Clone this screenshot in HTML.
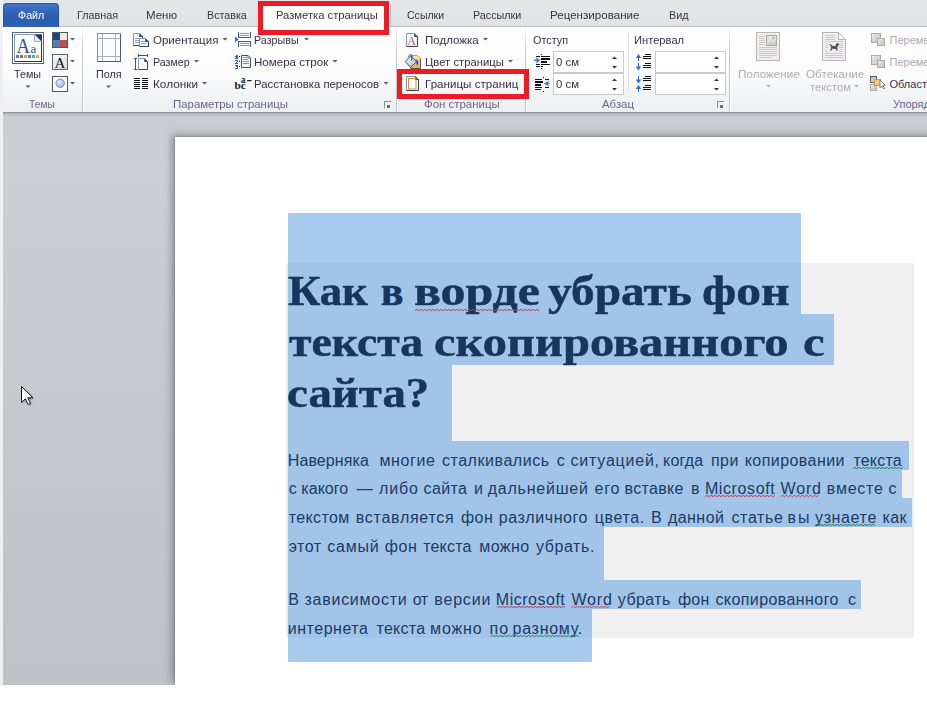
<!DOCTYPE html><html><head><meta charset="utf-8"><style>
*{margin:0;padding:0;box-sizing:border-box}
html,body{width:927px;height:723px;overflow:hidden;background:#fff;position:relative}
.a{position:absolute}
.t{position:absolute;white-space:pre;line-height:1;transform-origin:0 0}
</style></head><body>
<div class="a" style="left:0;top:0;width:3px;height:685px;background:#efefef"></div>
<div class="a" style="left:3px;top:0;width:924px;height:27px;background:linear-gradient(#e4e7ea,#dfe3e6)"></div>
<div class="a" style="left:3px;top:26px;width:924px;height:1px;background:#b8bdc3"></div>
<div class="a" style="left:3px;top:3px;width:56px;height:24px;border-radius:4px 4px 0 0;background:linear-gradient(#3f74c6,#2b5cae 60%,#2f62b4);border:1px solid #2a55a0;border-bottom:none"></div>
<div class="a" style="left:262px;top:3px;width:129px;height:24px;border-radius:3px 3px 0 0;background:#fff;border:1px solid #b6bbc2;border-bottom:none"></div>
<div class="a" style="left:3px;top:27px;width:924px;height:85px;background:linear-gradient(#ffffff 0%,#fbfbfc 55%,#f1f3f5 80%,#eceff2 100%)"></div>
<div class="a" style="left:3px;top:112px;width:924px;height:1px;background:#8f959c"></div>
<div class="a" style="left:3px;top:113px;width:924px;height:572px;background:linear-gradient(#c9cdd2,#cbcfd4 10%,#bec1c6)"></div>
<div class="a" style="left:3px;top:113px;width:924px;height:3px;background:linear-gradient(#aeb2b8,rgba(203,207,212,0))"></div>
<div class="a" style="left:175px;top:137px;width:800px;height:548px;background:#fff;box-shadow:-3px -2px 8px rgba(60,65,75,0.45), 0 0 2px rgba(60,65,75,0.5)"></div>
<div class="a" style="left:286px;top:263px;width:628px;height:375px;background:#f0f0f0"></div>
<div class="a" style="left:288px;top:213px;width:513px;height:50px;background:#a8cbef"></div>
<div class="a" style="left:288px;top:263px;width:513px;height:51px;background:#a1c4e8"></div>
<div class="a" style="left:288px;top:314px;width:546px;height:51px;background:#a1c4e8"></div>
<div class="a" style="left:288px;top:365px;width:164px;height:76px;background:#a1c4e8"></div>
<div class="a" style="left:288px;top:441px;width:621px;height:29px;background:#a1c4e8"></div>
<div class="a" style="left:288px;top:470px;width:614px;height:28px;background:#a1c4e8"></div>
<div class="a" style="left:288px;top:498px;width:624px;height:29px;background:#a1c4e8"></div>
<div class="a" style="left:288px;top:527px;width:316px;height:53px;background:#a1c4e8"></div>
<div class="a" style="left:288px;top:580px;width:573px;height:29px;background:#a1c4e8"></div>
<div class="a" style="left:288px;top:609px;width:304px;height:29px;background:#a1c4e8"></div>
<div class="a" style="left:288px;top:638px;width:304px;height:24px;background:#a8cbef"></div>
<svg class="a" style="left:0;top:0" width="927" height="113" viewBox="0 0 927 113">
<defs>
<linearGradient id="gSep" x1="0" y1="0" x2="0" y2="1"><stop offset="0" stop-color="#c5c9cf" stop-opacity="0.1"/><stop offset="0.25" stop-color="#c5c9cf"/><stop offset="1" stop-color="#c0c4ca"/></linearGradient>
<linearGradient id="gPage" x1="0" y1="0" x2="1" y2="1"><stop offset="0" stop-color="#ffffff"/><stop offset="1" stop-color="#d9e0ea"/></linearGradient>
<linearGradient id="gFont" x1="0" y1="0" x2="1" y2="1"><stop offset="0" stop-color="#f6f8fb"/><stop offset="1" stop-color="#d5dde8"/></linearGradient>
<linearGradient id="gSq" x1="0" y1="0" x2="1" y2="1"><stop offset="0" stop-color="#eeeeee"/><stop offset="1" stop-color="#bdbdbd"/></linearGradient>
<radialGradient id="gCirc" cx="0.4" cy="0.35" r="0.7"><stop offset="0" stop-color="#e4eefc"/><stop offset="1" stop-color="#8fb3e8"/></radialGradient>
<linearGradient id="gBucket" x1="0" y1="0" x2="1" y2="1"><stop offset="0" stop-color="#ffffff"/><stop offset="1" stop-color="#9fb9dc"/></linearGradient>
<linearGradient id="gYel" x1="0" y1="0" x2="0" y2="1"><stop offset="0" stop-color="#fbe3a8"/><stop offset="1" stop-color="#e9b661"/></linearGradient>
</defs>
<g shape-rendering="crispEdges">
<!-- group separators -->
<rect x="82" y="27" width="1" height="85" fill="url(#gSep)"/><rect x="83" y="27" width="1" height="85" fill="#ffffff"/>
<rect x="396" y="27" width="1" height="85" fill="url(#gSep)"/><rect x="397" y="27" width="1" height="85" fill="#ffffff"/>
<rect x="525" y="27" width="1" height="85" fill="url(#gSep)"/><rect x="526" y="27" width="1" height="85" fill="#ffffff"/>
<rect x="729" y="27" width="1" height="85" fill="url(#gSep)"/><rect x="730" y="27" width="1" height="85" fill="#ffffff"/>
<rect x="628" y="34" width="1" height="56" fill="#dcdfe3"/>

<!-- Темы big icon -->
<rect x="12.5" y="32.5" width="31" height="31" fill="#ffffff" stroke="#5d6675"/>
<rect x="14.5" y="34.5" width="27" height="27" fill="#ffffff" stroke="#8d9cb6"/><path d="M41.5 34.5 V61.5 H14.5" fill="none" stroke="#22325a"/>
<rect x="16" y="55" width="3" height="3" fill="#4f81bd"/>
<rect x="20" y="55" width="3" height="3" fill="#c0504d"/>
<rect x="24" y="55" width="3" height="3" fill="#9bbb59"/>
<rect x="28" y="55" width="3" height="3" fill="#8064a2"/>
<rect x="32" y="55" width="3" height="3" fill="#4bacc6"/>
<rect x="36" y="55" width="3" height="3" fill="#f79646"/>
<!-- Colors icon -->
<rect x="52.5" y="32.5" width="15" height="15" fill="#fff" stroke="#4e5663"/>
<rect x="53" y="33" width="7" height="7" fill="#1f497d"/>
<rect x="60" y="33" width="7" height="7" fill="#eeece1"/>
<rect x="53" y="40" width="7" height="7" fill="#4f81bd"/>
<rect x="60" y="40" width="7" height="7" fill="#c0504d"/>
<!-- Fonts icon -->
<rect x="52.5" y="54.5" width="15" height="15" fill="url(#gFont)" stroke="#5a6270"/>
<!-- Effects icon -->
<rect x="52.5" y="76.5" width="15" height="15" fill="#fff" stroke="#4e5663"/>
<!-- Поля icon -->
<rect x="97.5" y="33.5" width="23" height="28" fill="#fbfcfe" stroke="#7d8ca3"/>
<path d="M120.5 33.5 V61.5 H97.5" fill="none" stroke="#4a5a78"/>
<rect x="102" y="34" width="1" height="27" fill="#a3b1c8"/>
<rect x="115" y="34" width="1" height="27" fill="#a3b1c8"/>
<rect x="98" y="38" width="22" height="1" fill="#a3b1c8"/>
<rect x="98" y="56" width="22" height="1" fill="#a3b1c8"/>
<!-- Колонки -->
<g fill="#111">
<rect x="134" y="78" width="6" height="1"/><rect x="142" y="78" width="6" height="1"/>
<rect x="134" y="80" width="6" height="1"/><rect x="142" y="80" width="6" height="1"/>
<rect x="134" y="82" width="6" height="1"/><rect x="142" y="82" width="6" height="1"/>
<rect x="134" y="84" width="6" height="1"/><rect x="142" y="84" width="6" height="1"/>
<rect x="134" y="86" width="6" height="1"/><rect x="142" y="86" width="6" height="1"/>
<rect x="134" y="88" width="6" height="1"/><rect x="142" y="88" width="6" height="1"/>
</g>
<!-- Размер -->
<g fill="#2f4e9c">
<rect x="135" y="58" width="1" height="12"/><rect x="134" y="58" width="3" height="1"/><rect x="134" y="69" width="3" height="1"/>
<rect x="138" y="55" width="10" height="1"/><rect x="138" y="54" width="1" height="3"/><rect x="147" y="54" width="1" height="3"/>
</g>
<!-- Разрывы -->
<path d="M238.5 32 V37.5 H250.5 V32" fill="#f4f6fa" stroke="#4a5b7a"/>
<rect x="240" y="33" width="9" height="1" fill="#7f98c8"/><rect x="240" y="35" width="9" height="1" fill="#7f98c8"/>
<path d="M238.5 47 V41.5 H250.5 V47" fill="#f4f6fa" stroke="#4a5b7a"/>
<rect x="240" y="43" width="9" height="1" fill="#7f98c8"/><rect x="240" y="45" width="9" height="1" fill="#7f98c8"/>
<!-- Номера строк -->

<!-- Отступ icons -->
<g fill="#111">
<rect x="541" y="54" width="1" height="1"/>
<rect x="536" y="56" width="4" height="1"/><rect x="541" y="56" width="9" height="1"/>
<rect x="541" y="58" width="9" height="2"/>
<rect x="541" y="61" width="6" height="2"/>
<rect x="536" y="64" width="4" height="1"/><rect x="541" y="64" width="9" height="1"/>
<rect x="536" y="66" width="4" height="1"/><rect x="541" y="66" width="2" height="1"/>
<rect x="541" y="68" width="1" height="1"/>
</g>
<g fill="#111">
<rect x="543" y="77" width="1" height="1"/>
<rect x="535" y="79" width="7" height="1"/><rect x="545" y="79" width="4" height="1"/>
<rect x="535" y="81" width="8" height="2"/>
<rect x="535" y="84" width="6" height="2"/>
<rect x="535" y="87" width="7" height="1"/><rect x="545" y="87" width="4" height="1"/>
<rect x="535" y="89" width="6" height="1"/>
<rect x="543" y="91" width="1" height="1"/>
</g>
<!-- spinboxes -->
<rect x="553.5" y="51.5" width="70" height="21" fill="#fff" stroke="#c6cad0"/>
<rect x="553.5" y="73.5" width="70" height="21" fill="#fff" stroke="#c6cad0"/>
<rect x="655.5" y="51.5" width="70" height="21" fill="#fff" stroke="#c6cad0"/>
<rect x="655.5" y="73.5" width="70" height="21" fill="#fff" stroke="#c6cad0"/>
<!-- Интервал icons -->
<g fill="#111">
<rect x="645" y="54" width="6" height="1"/><rect x="643" y="56" width="8" height="1"/><rect x="643" y="58" width="8" height="1"/>
<rect x="645" y="63" width="6" height="1"/><rect x="643" y="65" width="8" height="1"/><rect x="643" y="67" width="8" height="1"/>
<rect x="645" y="76" width="6" height="1"/><rect x="643" y="78" width="8" height="1"/><rect x="643" y="80" width="8" height="1"/>
<rect x="645" y="85" width="6" height="1"/><rect x="643" y="87" width="8" height="1"/><rect x="643" y="89" width="8" height="1"/>
</g>
<g fill="#2f6ad0">
<rect x="638" y="56" width="1" height="5"/><rect x="638" y="63" width="1" height="5"/>
<rect x="638" y="76" width="1" height="5"/><rect x="638" y="87" width="1" height="5"/>
</g>
<!-- Положение -->
<rect x="756.5" y="32.5" width="23" height="28" fill="#efeded" stroke="#b9b5b5"/>
<g fill="#cfcaca">
<rect x="759" y="36" width="6" height="1"/><rect x="759" y="38" width="6" height="1"/><rect x="759" y="40" width="6" height="1"/><rect x="759" y="42" width="6" height="1"/><rect x="759" y="44" width="6" height="1"/>
<rect x="759" y="47" width="18" height="1"/><rect x="759" y="49" width="18" height="1"/><rect x="759" y="51" width="18" height="1"/><rect x="759" y="53" width="18" height="1"/><rect x="759" y="55" width="18" height="1"/><rect x="759" y="57" width="12" height="1"/>
</g>
<rect x="766.5" y="35.5" width="10" height="10" fill="#e3e0e0" stroke="#a9a5a5"/>
<!-- Обтекание -->
<path d="M822.5 32.5 H838.5 L845.5 39.5 V60.5 H822.5 Z" fill="#efedef" stroke="#b9b5b9"/>
<g fill="#cdc9cd">
<rect x="825" y="35" width="10" height="1"/><rect x="825" y="37" width="10" height="1"/><rect x="825" y="39" width="10" height="1"/>
<rect x="825" y="41" width="18" height="1"/>
<rect x="825" y="43" width="2" height="1"/><rect x="841" y="43" width="2" height="1"/>
<rect x="825" y="45" width="3" height="1"/><rect x="840" y="45" width="3" height="1"/>
<rect x="825" y="47" width="3" height="1"/><rect x="839" y="47" width="4" height="1"/>
<rect x="825" y="49" width="2" height="1"/><rect x="840" y="49" width="3" height="1"/>
<rect x="825" y="51" width="3" height="1"/><rect x="839" y="51" width="4" height="1"/>
<rect x="825" y="53" width="18" height="1"/><rect x="825" y="55" width="18" height="1"/><rect x="825" y="57" width="18" height="1"/>
</g>
<!-- Arrange icons -->
<rect x="871.5" y="33.5" width="9" height="9" fill="url(#gSq)" stroke="#a9a9a9"/>
<rect x="877.5" y="38.5" width="7" height="7" fill="url(#gSq)" stroke="#a9a9a9"/>
<rect x="871.5" y="55.5" width="9" height="9" fill="url(#gSq)" stroke="#a9a9a9"/>
<rect x="877.5" y="60.5" width="7" height="7" fill="url(#gSq)" stroke="#a9a9a9"/>
<rect x="870.5" y="76.5" width="6" height="6" fill="#c5ccd6" stroke="#4e5a70"/>
<rect x="870.5" y="84.5" width="6" height="6" fill="url(#gSq)" stroke="#a9a9a9"/>
<rect x="874.5" y="79.5" width="6" height="6" fill="#f5c878" stroke="#c99a3e"/>
<!-- dialog launchers -->
<path d="M384.5 108 V101.5 H391" fill="none" stroke="#8d8d8d"/>
<rect x="387" y="105" width="3" height="3" fill="#6d6d6d"/>
<path d="M717.5 108 V101.5 H724" fill="none" stroke="#8d8d8d"/>
<rect x="720" y="105" width="3" height="3" fill="#6d6d6d"/>
</g>

<!-- antialiased parts -->
<!-- Темы dog-ear -->
<path d="M34.5 34.5 H41.5 V41.5 Z" fill="#1f3466"/>
<path d="M34.5 34.5 V41.5 H41.5 Z" fill="#e3e9f4" stroke="#8d9cb6" stroke-width="0.8"/>
<text x="16.6" y="53" font-family="Liberation Serif" font-size="20.5" fill="#2c4f9a" textLength="13.5" lengthAdjust="spacingAndGlyphs">A</text>
<text x="30.6" y="53" font-family="Liberation Serif" font-size="13" fill="#2c4f9a">a</text>
<text x="54.5" y="68" font-family="Liberation Serif" font-size="15" fill="#111">A</text>
<circle cx="60.2" cy="83.2" r="4.2" fill="url(#gCirc)" stroke="#5b86cf" stroke-width="0.9"/>
<!-- Ориентация -->
<path d="M133.5 33.5 H139.5 L142.5 36.5 V45.5 H133.5 Z" fill="#fbfcfe" stroke="#8393b0"/>
<path d="M142.5 36.5 V45.5 H133.5" fill="none" stroke="#2f4664"/>
<path d="M139.2 33.2 L143 37 H139.2 Z" fill="#2f4664"/>
<g fill="#8fa2c4" shape-rendering="crispEdges"><rect x="135" y="38" width="4" height="1"/><rect x="135" y="40" width="4" height="1"/><rect x="135" y="42" width="4" height="1"/></g>
<path d="M139.5 38.5 H145.5 L148.5 41.5 V46.5 H139.5 Z" fill="#f1f4fa" stroke="#8393b0"/>
<path d="M148.5 41.5 V46.5 H139.5" fill="none" stroke="#2f4664"/>
<path d="M145.2 38.2 L149 42 H145.2 Z" fill="#2f4664"/>
<g fill="#8fa2c4" shape-rendering="crispEdges"><rect x="141" y="41" width="4" height="1"/><rect x="141" y="43" width="5" height="1"/></g>
<!-- Размер page -->
<path d="M138.5 58.5 H144.5 L147.5 61.5 V69.5 H138.5 Z" fill="#fbfcfe" stroke="#8393b0"/><path d="M147.5 61.5 V69.5 H138.5" fill="none" stroke="#2f4664"/><path d="M144.2 58.2 L148.0 62.0 H144.2 Z" fill="#2f4664"/>
<!-- Разрывы triangle -->
<path d="M235 36.5 L238.5 39.5 L235 42.5 Z" fill="#2f6ad0"/>
<!-- Номера строк -->
<g fill="#2e62c8" shape-rendering="crispEdges">
<rect x="236" y="55" width="2" height="4"/><rect x="235" y="56" width="1" height="1"/><rect x="235" y="58" width="3" height="1"/>
<rect x="235" y="60" width="3" height="1"/><rect x="237" y="61" width="1" height="1"/><rect x="236" y="62" width="1" height="1"/><rect x="235" y="63" width="3" height="1"/>
<rect x="235" y="65" width="3" height="1"/><rect x="236" y="66" width="2" height="1"/><rect x="237" y="67" width="1" height="1"/><rect x="235" y="68" width="3" height="1"/>
</g>
<g fill="#111" shape-rendering="crispEdges"><rect x="239" y="56" width="1" height="1"/><rect x="239" y="61" width="1" height="1"/><rect x="239" y="66" width="1" height="1"/></g>
<path d="M241.5 55.5 H248 L250.5 58 V67.5 H241.5 Z" fill="#f4f6fa" stroke="#3d5478"/>
<path d="M248 55.5 V58 H250.5" fill="#dfe6f0" stroke="#3d5478" stroke-width="0.8"/>
<g fill="#7f8fb0" shape-rendering="crispEdges"><rect x="243" y="57" width="4" height="1"/><rect x="243" y="59" width="5" height="1"/><rect x="243" y="61" width="6" height="1"/><rect x="243" y="63" width="6" height="1"/></g>
<!-- Расстановка -->
<text x="234.5" y="89" font-family="Liberation Serif" font-weight="bold" font-size="11" fill="#222" textLength="11.3" lengthAdjust="spacingAndGlyphs">bc</text>
<text x="240.8" y="82.6" font-family="Liberation Serif" font-weight="bold" font-size="9.5" fill="#222">a</text>
<rect x="247" y="80" width="4.5" height="1.2" fill="#222"/>
<!-- Подложка -->
<path d="M406.5 33.5 H414.5 L417.5 36.5 V46.5 H406.5 Z" fill="#fbfcfe" stroke="#8393b0"/><path d="M417.5 36.5 V46.5 H406.5" fill="none" stroke="#2f4664"/><path d="M414.2 33.2 L418.0 37.0 H414.2 Z" fill="#2f4664"/>
<text x="407.3" y="45.3" font-family="Liberation Serif" font-size="12" fill="#c0504d">A</text>
<!-- Цвет страницы -->
<path d="M410.5 55.5 H417.5 L420.5 58.5 V68.5 H410.5 Z" fill="url(#gYel)" stroke="#caa25a"/>
<path d="M420.5 58.5 V68.5 H410.5" fill="none" stroke="#5a4a30" stroke-width="0.9"/>
<path d="M405.2 61.5 L410.5 56.2 L416.8 61.5 L410.5 67.3 Z" fill="url(#gBucket)" stroke="#22407a" stroke-width="0.9"/>
<path d="M408 57.5 Q409 53.8 411.5 54.5 Q412.5 55.5 412 57" fill="none" stroke="#4a6fb0" stroke-width="0.9"/>
<line x1="411.7" y1="55.5" x2="411.7" y2="60.5" stroke="#3a4a60" stroke-width="1"/>
<path d="M416 59.5 Q418.8 60 418.5 63 Q418.2 65.5 417 66 Q416.5 63.5 415.8 62 Z" fill="#2d62d0"/>
<!-- Границы страниц -->
<path d="M406.5 76.5 H415.5 L418.5 79.5 V90.5 H406.5 Z" fill="#fbfcfe" stroke="#8393b0"/><path d="M418.5 79.5 V90.5 H406.5" fill="none" stroke="#2f4664"/><path d="M415.2 76.2 L419.0 80.0 H415.2 Z" fill="#2f4664"/>
<rect x="408.5" y="78.5" width="7.5" height="10.5" fill="none" stroke="#dc8c28"/>
<!-- Отступ arrows -->
<g fill="#3570d4">
<rect x="534" y="59.6" width="3.5" height="1.3"/>
<path d="M535.5 57.2 L540.6 60.2 L535.5 63.2 L537 60.2 Z"/>
<rect x="546" y="82.8" width="3.5" height="1.3"/>
<path d="M549 80.4 L543.9 83.4 L549 86.4 L547.5 83.4 Z"/>
</g>
<!-- Интервал arrows -->
<g fill="#2f6ad0">
<path d="M635.8 58 L638.5 54 L641.2 58 Z"/>
<path d="M635.8 66.5 L638.5 70.5 L641.2 66.5 Z"/>
<path d="M635.8 79.5 L638.5 83.5 L641.2 79.5 Z"/>
<path d="M635.8 89 L638.5 85 L641.2 89 Z"/>
</g>
<!-- spin arrows -->
<g fill="#333">
<path d="M612 59 L614.5 56.5 L617 59 Z"/><path d="M612 66 L614.5 68.5 L617 66 Z"/>
<path d="M612 81 L614.5 78.5 L617 81 Z"/><path d="M612 88 L614.5 90.5 L617 88 Z"/>
<path d="M714 59 L716.5 56.5 L719 59 Z"/><path d="M714 66 L716.5 68.5 L719 66 Z"/>
<path d="M714 81 L716.5 78.5 L719 81 Z"/><path d="M714 88 L716.5 90.5 L719 88 Z"/>
</g>
<!-- fold -->
<path d="M838.5 32.5 V39.5 H845.5 Z" fill="#fbfbfb" stroke="#b9b5b5" stroke-linejoin="round"/>
<!-- dog -->
<path d="M828.8 43.9 L830.9 44.3 L832.6 45.9 L835.4 45.9 L836.2 43.7 L837.8 42.9 L839.2 44 L839.3 44.9 L838.1 45.5 L837.2 47.8 L837.8 50.2 L837 51 L835.7 49.1 L832.4 48.7 L831.4 50.6 L830.1 51 L830.5 49.4 L831.1 47.4 L830.3 45.2 Z" fill="#555"/>
<!-- Положение picture -->
<path d="M767.5 45 L771 40.5 L773.5 43 L776 40 V45 Z" fill="#cfcbcb"/>
<circle cx="773.5" cy="38" r="1.2" fill="#bdb8b8"/>
<!-- selection cursor small -->
<path d="M880 80 V88 L882 86 L883.5 89 L884.5 88.5 L883 85.5 L885.5 85.5 Z" fill="#fff" stroke="#555" stroke-width="0.7"/>
<!-- dropdown arrows -->
<g fill="#595959">
<path d="M70 38 H75 L72.5 40.5 Z"/><path d="M70 60 H75 L72.5 62.5 Z"/><path d="M70 82 H75 L72.5 84.5 Z"/>
<path d="M25.5 85.5 H30.5 L28 88 Z"/><path d="M106 85.5 H111 L108.5 88 Z"/>
<path d="M222.5 38 H227.5 L225 40.5 Z"/><path d="M194 60 H199 L196.5 62.5 Z"/><path d="M202 82 H207 L204.5 84.5 Z"/>
<path d="M304 38 H309 L306.5 40.5 Z"/><path d="M332.5 60 H337.5 L335 62.5 Z"/><path d="M383.5 82 H388.5 L386 84.5 Z"/>
<path d="M483 38 H488 L485.5 40.5 Z"/><path d="M508 60 H513 L510.5 62.5 Z"/>
</g>
<g fill="#b4b4b4">
<path d="M766 85 H771 L768.5 87.5 Z"/><path d="M854 85 H859 L856.5 87.5 Z"/>
</g>
</svg>
<!-- mouse cursor -->
<svg class="a" style="left:19px;top:384px" width="18" height="24" viewBox="0 0 18 24">
<defs><filter id="cs" x="-50%" y="-50%" width="200%" height="200%"><feGaussianBlur stdDeviation="0.9"/></filter></defs>
<path d="M2.5 2.5 V18.5 L6.3 14.8 L9.2 20.5 L11.5 19.5 L8.8 13.8 L14 13.8 Z" fill="#000" opacity="0.3" filter="url(#cs)" transform="translate(1.2,1.2)"/>
<path d="M2.5 2.5 V18.5 L6.3 14.8 L9.2 20.5 L11.5 19.5 L8.8 13.8 L14 13.8 Z" fill="#fff" stroke="#111" stroke-width="1" stroke-linejoin="miter"/>
</svg>

<div class="t" style="left:17.70px;top:9.54px;font-family:'Liberation Sans', sans-serif;font-size:11px;font-weight:normal;color:#ffffff;transform:scaleX(0.9724);">Файл</div>
<div class="t" style="left:76.60px;top:9.54px;font-family:'Liberation Sans', sans-serif;font-size:11px;font-weight:normal;color:#3c3248;transform:scaleX(0.9791);">Главная</div>
<div class="t" style="left:146.30px;top:9.54px;font-family:'Liberation Sans', sans-serif;font-size:11px;font-weight:normal;color:#3c3248;transform:scaleX(1.0426);">Меню</div>
<div class="t" style="left:206.50px;top:9.54px;font-family:'Liberation Sans', sans-serif;font-size:11px;font-weight:normal;color:#3c3248;transform:scaleX(0.9733);">Вставка</div>
<div class="t" style="left:275.70px;top:9.54px;font-family:'Liberation Sans', sans-serif;font-size:11px;font-weight:normal;color:#3c3248;transform:scaleX(1.0201);">Разметка страницы</div>
<div class="t" style="left:406.90px;top:9.54px;font-family:'Liberation Sans', sans-serif;font-size:11px;font-weight:normal;color:#3c3248;transform:scaleX(0.9578);">Ссылки</div>
<div class="t" style="left:473.00px;top:9.54px;font-family:'Liberation Sans', sans-serif;font-size:11px;font-weight:normal;color:#3c3248;transform:scaleX(0.9782);">Рассылки</div>
<div class="t" style="left:550.20px;top:9.54px;font-family:'Liberation Sans', sans-serif;font-size:11px;font-weight:normal;color:#3c3248;transform:scaleX(1.0535);">Рецензирование</div>
<div class="t" style="left:668.60px;top:9.54px;font-family:'Liberation Sans', sans-serif;font-size:11px;font-weight:normal;color:#3c3248;transform:scaleX(0.9846);">Вид</div>
<div class="t" style="left:13.70px;top:69.05px;font-family:'Liberation Sans', sans-serif;font-size:11px;font-weight:normal;color:#3a2f46;transform:scaleX(0.9746);">Темы</div>
<div class="t" style="left:95.80px;top:69.05px;font-family:'Liberation Sans', sans-serif;font-size:11px;font-weight:normal;color:#3a2f46;transform:scaleX(0.9820);">Поля</div>
<div class="t" style="left:152.60px;top:35.05px;font-family:'Liberation Sans', sans-serif;font-size:11px;font-weight:normal;color:#3a2f46;transform:scaleX(1.0472);">Ориентация</div>
<div class="t" style="left:152.60px;top:57.05px;font-family:'Liberation Sans', sans-serif;font-size:11px;font-weight:normal;color:#3a2f46;transform:scaleX(0.9679);">Размер</div>
<div class="t" style="left:152.60px;top:79.05px;font-family:'Liberation Sans', sans-serif;font-size:11px;font-weight:normal;color:#3a2f46;transform:scaleX(1.0718);">Колонки</div>
<div class="t" style="left:254.40px;top:35.05px;font-family:'Liberation Sans', sans-serif;font-size:11px;font-weight:normal;color:#3a2f46;transform:scaleX(0.9739);">Разрывы</div>
<div class="t" style="left:254.40px;top:57.05px;font-family:'Liberation Sans', sans-serif;font-size:11px;font-weight:normal;color:#3a2f46;transform:scaleX(1.0520);">Номера строк</div>
<div class="t" style="left:254.40px;top:79.05px;font-family:'Liberation Sans', sans-serif;font-size:11px;font-weight:normal;color:#3a2f46;transform:scaleX(1.0298);">Расстановка переносов</div>
<div class="t" style="left:424.50px;top:35.05px;font-family:'Liberation Sans', sans-serif;font-size:11px;font-weight:normal;color:#3a2f46;transform:scaleX(1.0472);">Подложка</div>
<div class="t" style="left:424.50px;top:57.05px;font-family:'Liberation Sans', sans-serif;font-size:11px;font-weight:normal;color:#3a2f46;transform:scaleX(1.0246);">Цвет страницы</div>
<div class="t" style="left:424.50px;top:79.05px;font-family:'Liberation Sans', sans-serif;font-size:11px;font-weight:normal;color:#3a2f46;transform:scaleX(1.0559);">Границы страниц</div>
<div class="t" style="left:532.60px;top:35.05px;font-family:'Liberation Sans', sans-serif;font-size:11px;font-weight:normal;color:#3a2f46;transform:scaleX(0.9833);">Отступ</div>
<div class="t" style="left:634.20px;top:35.05px;font-family:'Liberation Sans', sans-serif;font-size:11px;font-weight:normal;color:#3a2f46;transform:scaleX(1.0144);">Интервал</div>
<div class="t" style="left:555.60px;top:57.05px;font-family:'Liberation Sans', sans-serif;font-size:11px;font-weight:normal;color:#3a2f46;transform:scaleX(1.0337);">0 см</div>
<div class="t" style="left:555.60px;top:79.05px;font-family:'Liberation Sans', sans-serif;font-size:11px;font-weight:normal;color:#3a2f46;transform:scaleX(1.0337);">0 см</div>
<div class="t" style="left:737.60px;top:69.05px;font-family:'Liberation Sans', sans-serif;font-size:11px;font-weight:normal;color:#b0aab4;transform:scaleX(1.0647);">Положение</div>
<div class="t" style="left:805.50px;top:69.05px;font-family:'Liberation Sans', sans-serif;font-size:11px;font-weight:normal;color:#b0aab4;transform:scaleX(1.0504);">Обтекание</div>
<div class="t" style="left:809.80px;top:82.05px;font-family:'Liberation Sans', sans-serif;font-size:11px;font-weight:normal;color:#b0aab4;transform:scaleX(1.0230);">текстом</div>
<div class="t" style="left:889.50px;top:35.05px;font-family:'Liberation Sans', sans-serif;font-size:11px;font-weight:normal;color:#b0aab4;">Переме</div>
<div class="t" style="left:889.50px;top:57.05px;font-family:'Liberation Sans', sans-serif;font-size:11px;font-weight:normal;color:#b0aab4;">Переме</div>
<div class="t" style="left:889.50px;top:79.05px;font-family:'Liberation Sans', sans-serif;font-size:11px;font-weight:normal;color:#3a2f46;">Област</div>
<div class="t" style="left:29.00px;top:99.05px;font-family:'Liberation Sans', sans-serif;font-size:11px;font-weight:normal;color:#6e6586;transform:scaleX(0.9385);">Темы</div>
<div class="t" style="left:172.50px;top:99.05px;font-family:'Liberation Sans', sans-serif;font-size:11px;font-weight:normal;color:#6e6586;transform:scaleX(1.0369);">Параметры страницы</div>
<div class="t" style="left:424.00px;top:99.05px;font-family:'Liberation Sans', sans-serif;font-size:11px;font-weight:normal;color:#6e6586;transform:scaleX(1.0397);">Фон страницы</div>
<div class="t" style="left:602.00px;top:99.05px;font-family:'Liberation Sans', sans-serif;font-size:11px;font-weight:normal;color:#6e6586;transform:scaleX(1.0370);">Абзац</div>
<div class="t" style="left:893.00px;top:99.05px;font-family:'Liberation Sans', sans-serif;font-size:11px;font-weight:normal;color:#6e6586;">Упоряд</div>
<div class="t" style="top:269.58px;font-family:'Liberation Serif', serif;font-size:42px;font-weight:bold;color:#17365d;left:288.40px;transform:scaleX(1.0632);-webkit-text-stroke:0.5px #17365d;">Как</div>
<div class="t" style="top:269.58px;font-family:'Liberation Serif', serif;font-size:42px;font-weight:bold;color:#17365d;left:380.80px;transform:scaleX(1.0000);-webkit-text-stroke:0.5px #17365d;">в</div>
<div class="t" style="top:269.58px;font-family:'Liberation Serif', serif;font-size:42px;font-weight:bold;color:#17365d;left:414.21px;transform:scaleX(1.1875);-webkit-text-stroke:0.5px #17365d;">ворде</div>
<div class="t" style="top:269.58px;font-family:'Liberation Serif', serif;font-size:42px;font-weight:bold;color:#17365d;left:547.60px;transform:scaleX(1.1268);-webkit-text-stroke:0.5px #17365d;">убрать</div>
<div class="t" style="top:269.58px;font-family:'Liberation Serif', serif;font-size:42px;font-weight:bold;color:#17365d;left:701.52px;transform:scaleX(1.1808);-webkit-text-stroke:0.5px #17365d;">фон</div>
<div class="t" style="top:320.58px;font-family:'Liberation Serif', serif;font-size:42px;font-weight:bold;color:#17365d;left:288.60px;transform:scaleX(1.0886);-webkit-text-stroke:0.5px #17365d;">текста</div>
<div class="t" style="top:320.58px;font-family:'Liberation Serif', serif;font-size:42px;font-weight:bold;color:#17365d;left:434.35px;transform:scaleX(1.1544);-webkit-text-stroke:0.5px #17365d;">скопированного</div>
<div class="t" style="top:320.58px;font-family:'Liberation Serif', serif;font-size:42px;font-weight:bold;color:#17365d;left:803.04px;transform:scaleX(1.1588);-webkit-text-stroke:0.5px #17365d;">с</div>
<div class="t" style="top:371.58px;font-family:'Liberation Serif', serif;font-size:42px;font-weight:bold;color:#17365d;left:287.48px;transform:scaleX(1.1161);-webkit-text-stroke:0.5px #17365d;">сайта?</div>
<div class="t" style="top:452.52px;font-family:'Liberation Sans', sans-serif;font-size:16px;font-weight:normal;color:#203b64;left:287.80px;letter-spacing:0.087px;">Наверняка</div>
<div class="t" style="top:452.52px;font-family:'Liberation Sans', sans-serif;font-size:16px;font-weight:normal;color:#203b64;left:379.50px;letter-spacing:0.580px;">многие</div>
<div class="t" style="top:452.52px;font-family:'Liberation Sans', sans-serif;font-size:16px;font-weight:normal;color:#203b64;left:441.90px;letter-spacing:0.555px;">сталкивались</div>
<div class="t" style="top:452.52px;font-family:'Liberation Sans', sans-serif;font-size:16px;font-weight:normal;color:#203b64;left:556.80px;letter-spacing:0.000px;">с</div>
<div class="t" style="top:452.52px;font-family:'Liberation Sans', sans-serif;font-size:16px;font-weight:normal;color:#203b64;left:570.60px;letter-spacing:0.767px;">ситуацией,</div>
<div class="t" style="top:452.52px;font-family:'Liberation Sans', sans-serif;font-size:16px;font-weight:normal;color:#203b64;left:663.10px;letter-spacing:0.175px;">когда</div>
<div class="t" style="top:452.52px;font-family:'Liberation Sans', sans-serif;font-size:16px;font-weight:normal;color:#203b64;left:711.00px;letter-spacing:0.450px;">при</div>
<div class="t" style="top:452.52px;font-family:'Liberation Sans', sans-serif;font-size:16px;font-weight:normal;color:#203b64;left:744.70px;letter-spacing:0.440px;">копировании</div>
<div class="t" style="top:452.52px;font-family:'Liberation Sans', sans-serif;font-size:16px;font-weight:normal;color:#203b64;left:853.40px;letter-spacing:0.200px;">текста</div>
<div class="t" style="top:480.52px;font-family:'Liberation Sans', sans-serif;font-size:16px;font-weight:normal;color:#203b64;left:288.80px;letter-spacing:0.000px;">с</div>
<div class="t" style="top:480.52px;font-family:'Liberation Sans', sans-serif;font-size:16px;font-weight:normal;color:#203b64;left:301.30px;letter-spacing:0.040px;">какого</div>
<div class="t" style="top:480.52px;font-family:'Liberation Sans', sans-serif;font-size:16px;font-weight:normal;color:#203b64;left:356.70px;letter-spacing:0.000px;">—</div>
<div class="t" style="top:480.52px;font-family:'Liberation Sans', sans-serif;font-size:16px;font-weight:normal;color:#203b64;left:379.10px;letter-spacing:0.833px;">либо</div>
<div class="t" style="top:480.52px;font-family:'Liberation Sans', sans-serif;font-size:16px;font-weight:normal;color:#203b64;left:423.50px;letter-spacing:0.400px;">сайта</div>
<div class="t" style="top:480.52px;font-family:'Liberation Sans', sans-serif;font-size:16px;font-weight:normal;color:#203b64;left:474.10px;letter-spacing:0.000px;">и</div>
<div class="t" style="top:480.52px;font-family:'Liberation Sans', sans-serif;font-size:16px;font-weight:normal;color:#203b64;left:487.70px;letter-spacing:0.767px;">дальнейшей</div>
<div class="t" style="top:480.52px;font-family:'Liberation Sans', sans-serif;font-size:16px;font-weight:normal;color:#203b64;left:594.50px;letter-spacing:0.748px;">его</div>
<div class="t" style="top:480.52px;font-family:'Liberation Sans', sans-serif;font-size:16px;font-weight:normal;color:#203b64;left:624.60px;letter-spacing:0.300px;">вставке</div>
<div class="t" style="top:480.52px;font-family:'Liberation Sans', sans-serif;font-size:16px;font-weight:normal;color:#203b64;left:691.00px;letter-spacing:0.000px;">в</div>
<div class="t" style="top:480.52px;font-family:'Liberation Sans', sans-serif;font-size:16px;font-weight:normal;color:#203b64;left:704.90px;letter-spacing:0.612px;">Microsoft</div>
<div class="t" style="top:480.52px;font-family:'Liberation Sans', sans-serif;font-size:16px;font-weight:normal;color:#203b64;left:780.60px;letter-spacing:0.800px;">Word</div>
<div class="t" style="top:480.52px;font-family:'Liberation Sans', sans-serif;font-size:16px;font-weight:normal;color:#203b64;left:826.80px;letter-spacing:0.760px;">вместе</div>
<div class="t" style="top:480.52px;font-family:'Liberation Sans', sans-serif;font-size:16px;font-weight:normal;color:#203b64;left:888.40px;letter-spacing:0.000px;">с</div>
<div class="t" style="top:510.02px;font-family:'Liberation Sans', sans-serif;font-size:16px;font-weight:normal;color:#203b64;left:288.80px;letter-spacing:0.350px;">текстом</div>
<div class="t" style="top:510.02px;font-family:'Liberation Sans', sans-serif;font-size:16px;font-weight:normal;color:#203b64;left:355.70px;letter-spacing:0.740px;">вставляется</div>
<div class="t" style="top:510.02px;font-family:'Liberation Sans', sans-serif;font-size:16px;font-weight:normal;color:#203b64;left:460.90px;letter-spacing:0.550px;">фон</div>
<div class="t" style="top:510.02px;font-family:'Liberation Sans', sans-serif;font-size:16px;font-weight:normal;color:#203b64;left:498.80px;letter-spacing:0.578px;">различного</div>
<div class="t" style="top:510.02px;font-family:'Liberation Sans', sans-serif;font-size:16px;font-weight:normal;color:#203b64;left:594.70px;letter-spacing:0.640px;">цвета.</div>
<div class="t" style="top:510.02px;font-family:'Liberation Sans', sans-serif;font-size:16px;font-weight:normal;color:#203b64;left:651.00px;letter-spacing:0.000px;">В</div>
<div class="t" style="top:510.02px;font-family:'Liberation Sans', sans-serif;font-size:16px;font-weight:normal;color:#203b64;left:667.90px;letter-spacing:0.460px;">данной</div>
<div class="t" style="top:510.02px;font-family:'Liberation Sans', sans-serif;font-size:16px;font-weight:normal;color:#203b64;left:731.50px;letter-spacing:0.620px;">статье</div>
<div class="t" style="top:510.02px;font-family:'Liberation Sans', sans-serif;font-size:16px;font-weight:normal;color:#203b64;left:787.40px;letter-spacing:2.000px;">вы</div>
<div class="t" style="top:510.02px;font-family:'Liberation Sans', sans-serif;font-size:16px;font-weight:normal;color:#203b64;left:815.00px;letter-spacing:0.633px;">узнаете</div>
<div class="t" style="top:510.02px;font-family:'Liberation Sans', sans-serif;font-size:16px;font-weight:normal;color:#203b64;left:882.50px;letter-spacing:0.400px;">как</div>
<div class="t" style="top:538.52px;font-family:'Liberation Sans', sans-serif;font-size:16px;font-weight:normal;color:#203b64;left:288.80px;letter-spacing:0.500px;">этот</div>
<div class="t" style="top:538.52px;font-family:'Liberation Sans', sans-serif;font-size:16px;font-weight:normal;color:#203b64;left:327.30px;letter-spacing:0.750px;">самый</div>
<div class="t" style="top:538.52px;font-family:'Liberation Sans', sans-serif;font-size:16px;font-weight:normal;color:#203b64;left:384.80px;letter-spacing:0.550px;">фон</div>
<div class="t" style="top:538.52px;font-family:'Liberation Sans', sans-serif;font-size:16px;font-weight:normal;color:#203b64;left:423.20px;letter-spacing:0.180px;">текста</div>
<div class="t" style="top:538.52px;font-family:'Liberation Sans', sans-serif;font-size:16px;font-weight:normal;color:#203b64;left:479.20px;letter-spacing:0.475px;">можно</div>
<div class="t" style="top:538.52px;font-family:'Liberation Sans', sans-serif;font-size:16px;font-weight:normal;color:#203b64;left:536.00px;letter-spacing:0.583px;">убрать.</div>
<div class="t" style="top:591.52px;font-family:'Liberation Sans', sans-serif;font-size:16px;font-weight:normal;color:#203b64;left:288.30px;letter-spacing:0.000px;">В</div>
<div class="t" style="top:591.52px;font-family:'Liberation Sans', sans-serif;font-size:16px;font-weight:normal;color:#203b64;left:304.50px;letter-spacing:0.740px;">зависимости</div>
<div class="t" style="top:591.52px;font-family:'Liberation Sans', sans-serif;font-size:16px;font-weight:normal;color:#203b64;left:412.80px;letter-spacing:-0.500px;">от</div>
<div class="t" style="top:591.52px;font-family:'Liberation Sans', sans-serif;font-size:16px;font-weight:normal;color:#203b64;left:434.30px;letter-spacing:0.820px;">версии</div>
<div class="t" style="top:591.52px;font-family:'Liberation Sans', sans-serif;font-size:16px;font-weight:normal;color:#203b64;left:495.80px;letter-spacing:0.512px;">Microsoft</div>
<div class="t" style="top:591.52px;font-family:'Liberation Sans', sans-serif;font-size:16px;font-weight:normal;color:#203b64;left:571.40px;letter-spacing:0.833px;">Word</div>
<div class="t" style="top:591.52px;font-family:'Liberation Sans', sans-serif;font-size:16px;font-weight:normal;color:#203b64;left:617.80px;letter-spacing:0.440px;">убрать</div>
<div class="t" style="top:591.52px;font-family:'Liberation Sans', sans-serif;font-size:16px;font-weight:normal;color:#203b64;left:677.90px;letter-spacing:0.300px;">фон</div>
<div class="t" style="top:591.52px;font-family:'Liberation Sans', sans-serif;font-size:16px;font-weight:normal;color:#203b64;left:715.40px;letter-spacing:0.415px;">скопированного</div>
<div class="t" style="top:591.52px;font-family:'Liberation Sans', sans-serif;font-size:16px;font-weight:normal;color:#203b64;left:848.10px;letter-spacing:0.000px;">с</div>
<div class="t" style="top:621.02px;font-family:'Liberation Sans', sans-serif;font-size:16px;font-weight:normal;color:#203b64;left:287.80px;letter-spacing:0.512px;">интернета</div>
<div class="t" style="top:621.02px;font-family:'Liberation Sans', sans-serif;font-size:16px;font-weight:normal;color:#203b64;left:376.50px;letter-spacing:0.260px;">текста</div>
<div class="t" style="top:621.02px;font-family:'Liberation Sans', sans-serif;font-size:16px;font-weight:normal;color:#203b64;left:430.00px;letter-spacing:0.900px;">можно</div>
<div class="t" style="top:621.02px;font-family:'Liberation Sans', sans-serif;font-size:16px;font-weight:normal;color:#203b64;left:489.60px;letter-spacing:0.900px;">по</div>
<div class="t" style="top:621.02px;font-family:'Liberation Sans', sans-serif;font-size:16px;font-weight:normal;color:#203b64;left:512.60px;letter-spacing:0.700px;">разному.</div>
<svg class="a" style="left:0;top:0" width="927" height="723"><polyline points="415.0,310.6 417.0,309.4 419.0,310.6 421.0,309.4 423.0,310.6 425.0,309.4 427.0,310.6 429.0,309.4 431.0,310.6 433.0,309.4 435.0,310.6 437.0,309.4 439.0,310.6 441.0,309.4 443.0,310.6 445.0,309.4 447.0,310.6 449.0,309.4 451.0,310.6 453.0,309.4 455.0,310.6 457.0,309.4 459.0,310.6 461.0,309.4 463.0,310.6 465.0,309.4 467.0,310.6 469.0,309.4 471.0,310.6 473.0,309.4 475.0,310.6 477.0,309.4 479.0,310.6 481.0,309.4 483.0,310.6 485.0,309.4 487.0,310.6 489.0,309.4 491.0,310.6 493.0,309.4 495.0,310.6 497.0,309.4 499.0,310.6 501.0,309.4 503.0,310.6 505.0,309.4 507.0,310.6 509.0,309.4 511.0,310.6 513.0,309.4 515.0,310.6 517.0,309.4 519.0,310.6 521.0,309.4 523.0,310.6 525.0,309.4 527.0,310.6 529.0,309.4 531.0,310.6 533.0,309.4 535.0,310.6 537.0,309.4 539.0,310.6" fill="none" stroke="#c8404f" stroke-width="1"/><polyline points="705.0,496.6 707.0,495.4 709.0,496.6 711.0,495.4 713.0,496.6 715.0,495.4 717.0,496.6 719.0,495.4 721.0,496.6 723.0,495.4 725.0,496.6 727.0,495.4 729.0,496.6 731.0,495.4 733.0,496.6 735.0,495.4 737.0,496.6 739.0,495.4 741.0,496.6 743.0,495.4 745.0,496.6 747.0,495.4 749.0,496.6 751.0,495.4 753.0,496.6 755.0,495.4 757.0,496.6 759.0,495.4 761.0,496.6 763.0,495.4 765.0,496.6 767.0,495.4 769.0,496.6 771.0,495.4 773.0,496.6 775.0,495.4" fill="none" stroke="#c8404f" stroke-width="1"/><polyline points="780.5,496.6 782.5,495.4 784.5,496.6 786.5,495.4 788.5,496.6 790.5,495.4 792.5,496.6 794.5,495.4 796.5,496.6 798.5,495.4 800.5,496.6 802.5,495.4 804.5,496.6 806.5,495.4 808.5,496.6 810.5,495.4 812.5,496.6 814.5,495.4 816.5,496.6 818.5,495.4" fill="none" stroke="#c8404f" stroke-width="1"/><polyline points="497.0,607.6 499.0,606.4 501.0,607.6 503.0,606.4 505.0,607.6 507.0,606.4 509.0,607.6 511.0,606.4 513.0,607.6 515.0,606.4 517.0,607.6 519.0,606.4 521.0,607.6 523.0,606.4 525.0,607.6 527.0,606.4 529.0,607.6 531.0,606.4 533.0,607.6 535.0,606.4 537.0,607.6 539.0,606.4 541.0,607.6 543.0,606.4 545.0,607.6 547.0,606.4 549.0,607.6 551.0,606.4 553.0,607.6 555.0,606.4 557.0,607.6 559.0,606.4 561.0,607.6 563.0,606.4 565.0,607.6" fill="none" stroke="#c8404f" stroke-width="1"/><polyline points="571.5,607.6 573.5,606.4 575.5,607.6 577.5,606.4 579.5,607.6 581.5,606.4 583.5,607.6 585.5,606.4 587.5,607.6 589.5,606.4 591.5,607.6 593.5,606.4 595.5,607.6 597.5,606.4 599.5,607.6 601.5,606.4 603.5,607.6 605.5,606.4 607.5,607.6 609.5,606.4" fill="none" stroke="#c8404f" stroke-width="1"/><polyline points="853.0,468.6 855.0,467.4 857.0,468.6 859.0,467.4 861.0,468.6 863.0,467.4 865.0,468.6 867.0,467.4 869.0,468.6 871.0,467.4 873.0,468.6 875.0,467.4 877.0,468.6 879.0,467.4 881.0,468.6 883.0,467.4 885.0,468.6 887.0,467.4 889.0,468.6 891.0,467.4 893.0,468.6 895.0,467.4 897.0,468.6 899.0,467.4 901.0,468.6 903.0,467.4" fill="none" stroke="#1e8c5a" stroke-width="1"/><polyline points="815.0,525.6 817.0,524.4 819.0,525.6 821.0,524.4 823.0,525.6 825.0,524.4 827.0,525.6 829.0,524.4 831.0,525.6 833.0,524.4 835.0,525.6 837.0,524.4 839.0,525.6 841.0,524.4 843.0,525.6 845.0,524.4 847.0,525.6 849.0,524.4 851.0,525.6 853.0,524.4 855.0,525.6 857.0,524.4 859.0,525.6 861.0,524.4 863.0,525.6 865.0,524.4 867.0,525.6 869.0,524.4 871.0,525.6 873.0,524.4 875.0,525.6" fill="none" stroke="#1e8c5a" stroke-width="1"/><polyline points="490.5,636.6 492.5,635.4 494.5,636.6 496.5,635.4 498.5,636.6 500.5,635.4 502.5,636.6 504.5,635.4 506.5,636.6 508.5,635.4 510.5,636.6 512.5,635.4 514.5,636.6 516.5,635.4 518.5,636.6 520.5,635.4 522.5,636.6 524.5,635.4 526.5,636.6 528.5,635.4 530.5,636.6 532.5,635.4 534.5,636.6 536.5,635.4 538.5,636.6 540.5,635.4 542.5,636.6 544.5,635.4 546.5,636.6 548.5,635.4 550.5,636.6 552.5,635.4 554.5,636.6 556.5,635.4 558.5,636.6 560.5,635.4 562.5,636.6 564.5,635.4 566.5,636.6 568.5,635.4 570.5,636.6 572.5,635.4 574.5,636.6 576.5,635.4 578.5,636.6" fill="none" stroke="#1e8c5a" stroke-width="1"/></svg>
<div class="a" style="left:258px;top:1px;width:131px;height:34px;border:5px solid #ed1c24"></div>
<div class="a" style="left:397px;top:69px;width:132px;height:30px;border:5px solid #ed1c24"></div>
<div class="a" style="left:0;top:685px;width:927px;height:38px;background:#fff"></div>
</body></html>
